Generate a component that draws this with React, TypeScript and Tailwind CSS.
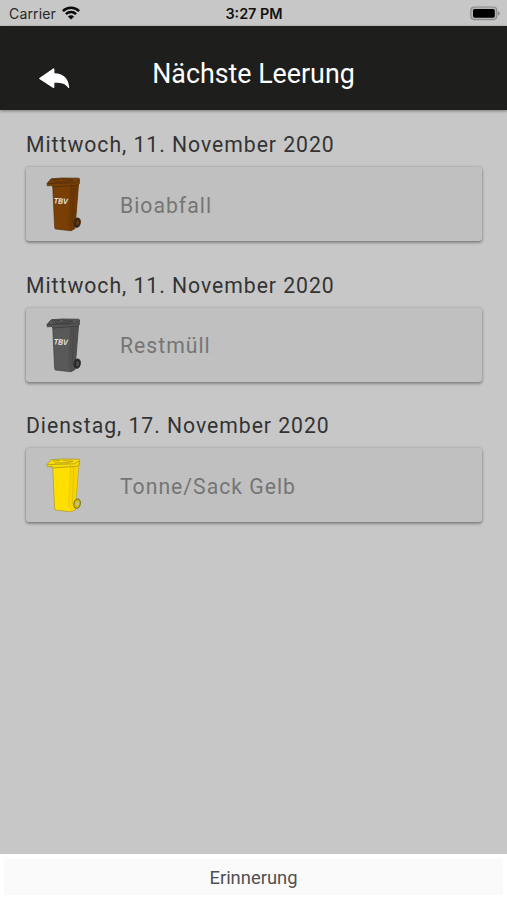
interface BinColors {
  body: string;
  side: string;
  lid: string;
  line: string;
}

interface Pickup {
  date: string;
  type: string;
  colors: BinColors;
  labelled: boolean;
}

const pickups: Pickup[] = [
  {
    date: 'Mittwoch, 11. November 2020',
    type: 'Bioabfall',
    colors: { body: '#7a3f04', side: '#6d3803', lid: '#784007', line: '#4c2a08' },
    labelled: true,
  },
  {
    date: 'Mittwoch, 11. November 2020',
    type: 'Restmüll',
    colors: { body: '#595959', side: '#505050', lid: '#575757', line: '#333333' },
    labelled: true,
  },
  {
    date: 'Dienstag, 17. November 2020',
    type: 'Tonne/Sack Gelb',
    colors: { body: '#ffdf00', side: '#f8d500', lid: '#f7dc0c', line: '#a58f16' },
    labelled: false,
  },
];

function WifiIcon() {
  return (
    <svg className="-mt-px h-[14px] w-[18px]" viewBox="0 0 18 14" fill="none" stroke="#0a0a0a" strokeWidth="2.5">
      <path d="M0.9 5.1C5.3 0.6 12.7 0.6 17.1 5.1" />
      <path d="M3.9 8.2C6.8 5.4 11.2 5.4 14.1 8.2" />
      <path d="M9 13.6L5.9 10.4C7.6 8.8 10.4 8.8 12.1 10.4Z" fill="#0a0a0a" stroke="none" />
    </svg>
  );
}

function BatteryIcon() {
  return (
    <svg className="h-[15px] w-[31px]" viewBox="0 0 31 15">
      <rect x="0.8" y="1" width="26" height="12.6" rx="3.5" fill="#b4b4b4" stroke="#8b8b8b" strokeWidth="1.2" />
      <rect x="3" y="3" width="21.8" height="8.7" rx="1.6" fill="#000" />
      <path d="M28 5.2C30.2 6 30.2 8.8 28 9.6Z" fill="#858585" />
    </svg>
  );
}

function BackIcon() {
  return (
    <svg className="h-[21px] w-[31px]" viewBox="0 0 31 21" fill="#fff">
      <path d="M0.4 10L14.2 0.4Q15.4 0 15.4 1.5V5.3C24.5 5.6 29.4 10.5 30.2 19.2C30.2 20.3 29.4 20.4 29 19.5C26.2 15.6 22.4 14.7 15.4 14.8V18.8Q15.2 20.5 13.8 19.8L0.4 11Q-0.1 10.5 0.4 10Z" />
    </svg>
  );
}

function Bin({ colors, labelled }: { colors: BinColors; labelled: boolean }) {
  return (
    <svg className="-mt-[2px] h-[66px] w-[50px]" viewBox="0 0 50 66" strokeLinejoin="round">
      <path d="M12.5 12L38.8 12L35 58.6L31 60.8L15.2 59L14.6 57Z" fill={colors.body} stroke={colors.line} strokeWidth="0.6" />
      <path d="M30.6 15L38.4 14L35 58.4L31 60.5L29.5 58.5Z" fill={colors.side} />
      <path d="M30.6 16L28.5 56M33.8 15.5L32.3 53" fill="none" stroke={colors.line} strokeWidth="0.5" opacity="0.5" />
      <ellipse
        cx="37.1"
        cy="52.7"
        rx="3.2"
        ry="4.7"
        transform="rotate(10 37.1 52.7)"
        fill={labelled ? '#292824' : '#d4b900'}
        stroke={labelled ? colors.line : '#75721a'}
        strokeWidth="1"
      />
      <ellipse cx="37.5" cy="52.7" rx="1.4" ry="2.6" transform="rotate(10 37.5 52.7)" fill={labelled ? colors.side : '#c7c38b'} />
      <path
        d="M11.2 8.7L22 8L38.8 8.2Q40 8.6 39.4 10V13.5L37 15.2L13 17L12 15.5L7.3 15.8L7 13.5Z"
        fill={colors.lid}
        stroke={colors.line}
        strokeWidth="0.7"
      />
      <path d="M7.5 13.6L34.5 12.8L39.2 10M12.5 10L20 9.6M14.5 12L28 11.8L33 10.2L23 9.6" fill="none" stroke={colors.line} strokeWidth="0.7" />
      {labelled && (
        <text
          x="13.8"
          y="33.6"
          className="font-['Liberation_Sans'] text-[8px] font-bold italic"
          fill="#ece6e0"
          textLength="14"
          lengthAdjust="spacingAndGlyphs"
          transform="rotate(2 14 33)"
        >
          TBV
        </text>
      )}
    </svg>
  );
}

function PickupItem({ pickup }: { pickup: Pickup }) {
  return (
    <section className="h-[140.7px]">
      <h2 className="h-[35px] text-[21.2px] leading-[25px] font-[450] tracking-[0.97px] whitespace-nowrap text-[#333333]">
        {pickup.date}
      </h2>
      <div className="flex h-[74px] items-center rounded-[3px] bg-[#c0c0c0] pl-[14px] shadow-[0_2px_3px_rgba(0,0,0,0.3),0_0_3px_rgba(0,0,0,0.22)]">
        <Bin colors={pickup.colors} labelled={pickup.labelled} />
        <span className="ml-[30px] pt-[2px] text-[21.2px] leading-[25px] font-[450] tracking-[1px] text-[#757575]">
          {pickup.type}
        </span>
      </div>
    </section>
  );
}

export default function App() {
  return (
    <div className="flex h-[900px] w-[507px] flex-col overflow-hidden bg-[#c7c7c7] font-[Roboto,sans-serif]">
      <div className="grid h-[26px] shrink-0 grid-cols-3 items-center pr-[6px] pl-[9px] font-[Inter,sans-serif] text-[14px] text-[#111111]">
        <div className="flex items-center gap-[6px]">
          <span className="tracking-[0.15px] text-[#262626]">Carrier</span>
          <WifiIcon />
        </div>
        <span className="pt-px pr-[2px] text-center text-[14.4px] font-semibold">3:27 PM</span>
        <div className="flex justify-end">
          <BatteryIcon />
        </div>
      </div>

      <header className="grid h-[84px] shrink-0 grid-cols-[113px_1fr_113px] items-center bg-[#1e1e1c] pt-[10px] shadow-[0_1px_3px_rgba(0,0,0,0.4)]">
        <button className="mt-[11px] pl-[39px]" aria-label="Zurück">
          <BackIcon />
        </button>
        <h1 className="pt-px text-center text-[26.8px] leading-[32px] whitespace-nowrap text-white">Nächste Leerung</h1>
      </header>

      <main className="grow pt-[22px] pr-[25px] pl-[26px]">
        {pickups.map((pickup) => (
          <PickupItem key={pickup.type} pickup={pickup} />
        ))}
      </main>

      <footer className="h-[46px] shrink-0 bg-white px-[4px] pt-[5px] pb-[5px]">
        <button className="h-[36px] w-full bg-[#fafafa] pt-[2px] text-[18.4px] leading-[24px] text-[#505050]">Erinnerung</button>
      </footer>
    </div>
  );
}
